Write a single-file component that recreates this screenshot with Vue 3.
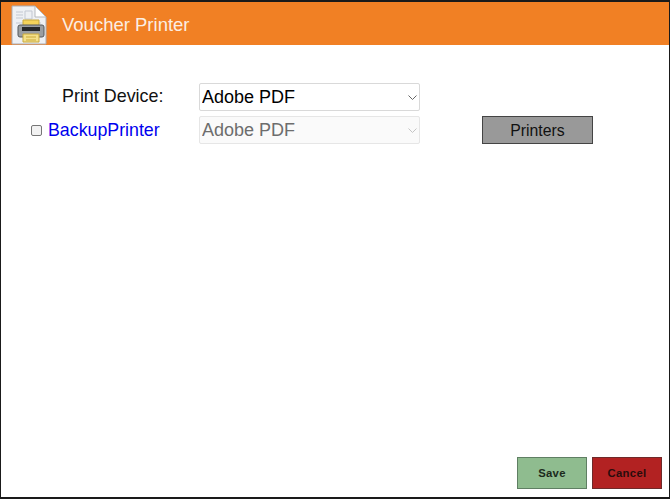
<script setup>
const printers = ['Adobe PDF']
</script>

<template>
  <div class="window">
    <header class="title-bar">
      <svg class="doc-icon" viewBox="0 0 36 40" width="36" height="40">
        <path d="M1 1H24L35 12V39H1Z" fill="#eef0f4" stroke="#a9adb5" />
        <path d="M24 1V12H35Z" fill="#fff" stroke="#b5b8bd" />
        <g fill="none" stroke="#c3c8d2" stroke-width="1">
          <path d="M5 7H12M5 10H12M5 13H12" />
          <path d="M14 6H21V14H14Z" />
          <path d="M5 18H30" />
        </g>
        <path d="M12 15H28V21H12Z" fill="#f4d35a" stroke="#c9a93a" />
        <rect x="7" y="20" width="26" height="12" rx="2" fill="#9a9ea2" stroke="#55585c" />
        <rect x="11" y="22" width="18" height="4" fill="#26282a" />
        <path d="M12 29H28V37H12Z" fill="#f3e08a" stroke="#c9a93a" />
        <path d="M15 32H25M15 35H25" stroke="#c9a93a" />
      </svg>
      <h1 class="title">Voucher Printer</h1>
    </header>

    <main class="content">
      <div class="form-rows">
        <div class="row">
          <label class="device-label">Print Device:</label>
          <div class="select-wrap">
            <select class="device-select">
              <option v-for="p in printers" :key="p">{{ p }}</option>
            </select>
            <svg class="chevron" viewBox="0 0 9 5" width="9" height="5">
              <path d="M0.5 0.5L4.5 4.5L8.5 0.5" fill="none" stroke="#666" />
            </svg>
          </div>
        </div>
        <div class="row second">
          <label class="backup-label">
            <input type="checkbox" class="check" />
            <span>BackupPrinter</span>
          </label>
          <div class="select-wrap">
            <select class="device-select" disabled>
              <option v-for="p in printers" :key="p">{{ p }}</option>
            </select>
            <svg class="chevron" viewBox="0 0 9 5" width="9" height="5">
              <path d="M0.5 0.5L4.5 4.5L8.5 0.5" fill="none" stroke="#c4c4c4" />
            </svg>
          </div>
          <button class="printers-btn">Printers</button>
        </div>
      </div>

      <div class="actions">
        <button class="action save">Save</button>
        <button class="action cancel">Cancel</button>
      </div>
    </main>
  </div>
</template>

<style>
html, body {
  margin: 0;
  background: #fff;
}
</style>

<style scoped>
.window {
  box-sizing: border-box;
  width: 670px;
  height: 499px;
  border: 1px solid #1a1a1a;
  border-top-width: 2px;
  border-bottom-width: 2px;
  display: flex;
  flex-direction: column;
  font-family: "Liberation Sans", Arial, sans-serif;
  background: #fff;
}
.title-bar {
  height: 43px;
  flex: none;
  background: #f18024;
  display: flex;
  align-items: center;
  padding-left: 10px;
}
.doc-icon {
  flex: none;
  margin-top: 3px;
}
.title {
  margin: 3px 0 0 15px;
  font-size: 18.5px;
  font-weight: normal;
  color: #fbeee2;
}
.content {
  flex: 1;
  display: flex;
  flex-direction: column;
  justify-content: space-between;
  padding: 38px 7px 8px 0;
}
.row {
  display: flex;
  align-items: center;
}
.second {
  margin-top: 5px;
}
.device-label {
  width: 198px;
  box-sizing: border-box;
  padding: 0 0 2px 61px;
  font-size: 17.9px;
  color: #111;
}
.backup-label {
  width: 198px;
  box-sizing: border-box;
  padding-left: 30px;
  display: flex;
  align-items: center;
  gap: 6px;
  font-size: 17.8px;
  color: #0000ee;
}
.check {
  appearance: none;
  width: 11px;
  height: 11px;
  margin: 0;
  background: #f2f2f2;
  border: 1px solid #767676;
  border-radius: 2px;
  box-sizing: border-box;
}
.select-wrap {
  position: relative;
  width: 221px;
  height: 28px;
}
.chevron {
  position: absolute;
  right: 3px;
  top: 12px;
  pointer-events: none;
}
.device-select {
  appearance: none;
  width: 100%;
  height: 100%;
  box-sizing: border-box;
  padding: 0 0 0 2px;
  font-family: "Liberation Sans", Arial, sans-serif;
  font-size: 18px;
  color: #000;
  background: #fff;
  border: 1px solid #d9d9d9;
  border-radius: 2px;
}
.device-select:disabled {
  color: #6d6d6d;
  background: #fafafa;
  border-color: #e6e6e6;
  opacity: 1;
}
.printers-btn {
  width: 111px;
  height: 28px;
  margin-left: 62px;
  background: #999;
  border: 1px solid #444;
  font-family: "Liberation Sans", Arial, sans-serif;
  font-size: 15.8px;
  color: #111;
  padding: 2px 0 0;
}
.actions {
  display: flex;
  justify-content: flex-end;
  gap: 5px;
}
.action {
  width: 70px;
  height: 32px;
  padding: 0;
  font-family: "Liberation Sans", Arial, sans-serif;
  font-size: 11.3px;
  font-weight: bold;
  letter-spacing: 0.3px;
}
.save {
  background: #8fbc8f;
  border: 1px solid #5f7f63;
  color: #1c2a1c;
}
.cancel {
  background: #b22222;
  border: 1px solid #6e2a2a;
  color: #2a0c0c;
}
</style>
